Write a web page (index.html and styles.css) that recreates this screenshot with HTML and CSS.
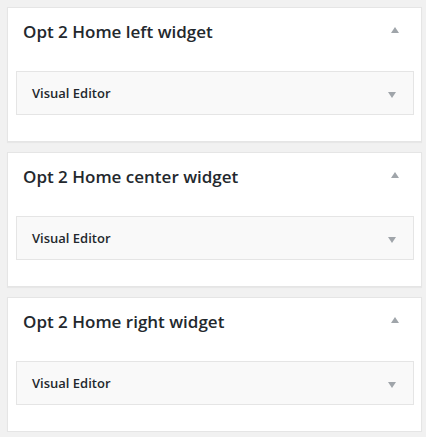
FILE: index.html
```html
<!DOCTYPE html>
<html>
<head>
<meta charset="utf-8">
<link rel="stylesheet" href="styles.css">
</head>
<body>
<div class="stack">
  <section class="card">
    <header class="card-head">
      <h2 class="card-title">Opt 2 Home left widget</h2>
      <svg class="toggle-up" width="8" height="6" viewBox="0 0 8 6"><path d="M4 0 L8 6 L0 6 Z"/></svg>
    </header>
    <div class="editor">
      <span class="editor-label">Visual Editor</span>
      <svg class="toggle-down" width="8" height="6" viewBox="0 0 8 6"><path d="M0 0 L8 0 L4 6 Z"/></svg>
    </div>
  </section>
  <section class="card">
    <header class="card-head">
      <h2 class="card-title">Opt 2 Home center widget</h2>
      <svg class="toggle-up" width="8" height="6" viewBox="0 0 8 6"><path d="M4 0 L8 6 L0 6 Z"/></svg>
    </header>
    <div class="editor">
      <span class="editor-label">Visual Editor</span>
      <svg class="toggle-down" width="8" height="6" viewBox="0 0 8 6"><path d="M0 0 L8 0 L4 6 Z"/></svg>
    </div>
  </section>
  <section class="card">
    <header class="card-head">
      <h2 class="card-title">Opt 2 Home right widget</h2>
      <svg class="toggle-up" width="8" height="6" viewBox="0 0 8 6"><path d="M4 0 L8 6 L0 6 Z"/></svg>
    </header>
    <div class="editor">
      <span class="editor-label">Visual Editor</span>
      <svg class="toggle-down" width="8" height="6" viewBox="0 0 8 6"><path d="M0 0 L8 0 L4 6 Z"/></svg>
    </div>
  </section>
</div>
</body>
</html>
```

FILE: styles.css
```css
html, body {
  margin: 0;
  padding: 0;
  background: #f1f1f1;
}
body {
  font-family: "Open Sans", "Noto Sans", sans-serif;
  color: #23282d;
}
.stack {
  display: flex;
  flex-direction: column;
  gap: 10px;
  padding: 7px 0 0 7px;
  width: 415px;
}
.card {
  background: #fff;
  border: 1px solid #e5e5e5;
  box-shadow: 0 1px 1px rgba(0, 0, 0, 0.04);
  height: 135px;
  box-sizing: border-box;
  display: flex;
  flex-direction: column;
}
.card-head {
  display: flex;
  align-items: flex-start;
  justify-content: space-between;
  padding: 12px 22px 0 15px;
  height: 63px;
  box-sizing: border-box;
}
.card-title {
  margin: 0;
  font-size: 17px;
  font-weight: 600;
  line-height: 24px;
  color: #23282d;
}
.toggle-up {
  margin-top: 7px;
  fill: #a0a5aa;
}
.editor {
  margin: 0 7px 0 8px;
  background: #f9f9f9;
  border: 1px solid #e5e5e5;
  padding: 11px 17px 11px 15px;
  display: flex;
  align-items: center;
  justify-content: space-between;
}
.editor-label {
  font-size: 13px;
  font-weight: 600;
  line-height: 20px;
  color: #23282d;
}
.toggle-down {
  margin-top: 3px;
  fill: #a0a5aa;
}
```
